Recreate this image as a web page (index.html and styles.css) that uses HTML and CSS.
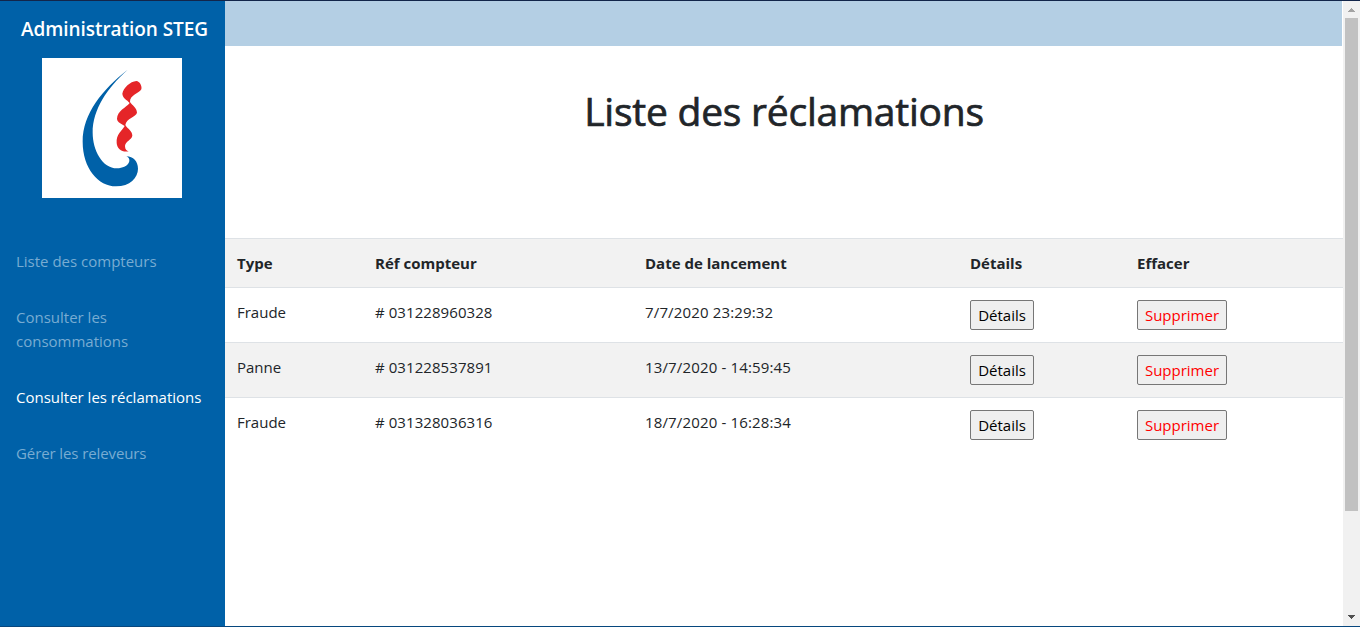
FILE: index.html
```html
<!DOCTYPE html>
<html lang="fr">
<head>
<meta charset="utf-8">
<title>Administration STEG</title>
<link rel="stylesheet" href="styles.css">
</head>
<body>
<div class="app">
  <aside class="sidebar">
    <div class="brand"><span class="brand-name">Administration STEG</span></div>
    <svg class="logo" viewBox="0 0 140 140" aria-hidden="true">
      <g transform="translate(28 2) scale(.33333)">
        <path fill="#0061a8" d="M173 29C98 88 38 160 38 245C38 325 85 379 138 379C180 379 204 353 204 326C204 305 190 289 169 289C188 297 177 325 141 325C97 325 68 270 68 218C68 148 112 83 173 29Z"/>
        <path fill="#e52528" d="M199 63C209 63 217 79 214 88C207 101 179 105 180 126C187 137 200 142 201 158C198 172 169 173 166 195C173 207 187 212 187 227C185 239 166 244 165 258C165 268 170 273 176 274C157 278 141 267 140 249C138 222 156 213 164 198C155 190 142 189 141 176C142 152 168 143 179 129C171 119 158 115 157 101C160 84 181 64 199 63Z"/>
      </g>
    </svg>
    <nav class="menu">
      <a class="menu-link link-meters">Liste des compteurs</a>
      <a class="menu-link link-usage">Consulter les consommations</a>
      <a class="menu-link active">Consulter les réclamations</a>
      <a class="menu-link link-readers">Gérer les releveurs</a>
    </nav>
  </aside>
  <main class="content">
    <div class="topbar"></div>
    <h1 class="title"><span>Liste des réclamations</span></h1>
    <table class="claims">
      <colgroup><col class="c-type"><col class="c-ref"><col class="c-date"><col class="c-details"><col class="c-delete"></colgroup>
      <tr class="head"><th>Type</th><th>Réf compteur</th><th>Date de lancement</th><th>Détails</th><th>Effacer</th></tr>
      <tr><td>Fraude</td><td class="ref"># 031228960328</td><td class="date">7/7/2020 23:29:32</td><td><button class="btn">Détails</button></td><td><button class="btn delete">Supprimer</button></td></tr>
      <tr><td>Panne</td><td class="ref"># 031228537891</td><td class="date">13/7/2020 - 14:59:45</td><td><button class="btn">Détails</button></td><td><button class="btn delete">Supprimer</button></td></tr>
      <tr><td>Fraude</td><td class="ref"># 031328036316</td><td class="date">18/7/2020 - 16:28:34</td><td><button class="btn">Détails</button></td><td><button class="btn delete">Supprimer</button></td></tr>
    </table>
  </main>
  <div class="scrollbar">
    <svg class="arrow" viewBox="0 0 17 17" shape-rendering="crispEdges"><path fill="#a3a3a3" d="M8 7h1v1h1v1h1v1h1v1H5v-1h1V9h1V8h1z"/></svg>
    <div class="thumb"></div>
    <svg class="arrow" viewBox="0 0 17 17" shape-rendering="crispEdges"><path fill="#505050" d="M5 6h7v1h-1v1h-1v1H9v1H8V9H7V8H6V7H5z"/></svg>
  </div>
</div>
</body>
</html>
```
FILE: styles.css
```css
* { box-sizing: border-box; }
body {
  margin: 0;
  height: 627px;
  overflow: hidden;
  background: #fff;
  color: #212529;
  font: 400 15px/24px "Open Sans", "Noto Sans", sans-serif;
}
.app {
  display: flex;
  height: 627px;
  border-top: 1px solid #12254a;
  border-bottom: 1px solid #07477e;
}
.sidebar {
  width: 225px;
  flex: none;
  display: flex;
  flex-direction: column;
  background: #0061a8;
  color: #fff;
}
.brand {
  height: 57px;
  padding: 13px 0 0 21px;
  font-size: 19px;
  line-height: 30px;
  font-weight: 600;
  letter-spacing: -.06px;
  white-space: nowrap;
}
.logo {
  display: block;
  width: 140px;
  height: 140px;
  margin-left: 42px;
  background: #fff;
}
.menu {
  display: flex;
  flex-direction: column;
  gap: 32px;
  padding: 51px 16px 0;
}
.menu-link { color: #78acd2; }
.menu-link.active { color: #fff; white-space: nowrap; }
.link-readers { letter-spacing: -.1px; }
.content { width: 1118px; flex: none; }
.topbar {
  height: 45px;
  margin-right: 1px;
  background: #b4cfe4;
}
.title {
  margin: 41px 0 0;
  height: 151px;
  font-size: 39px;
  line-height: 48px;
  font-weight: 500;
  letter-spacing: -.23px;
  -webkit-text-stroke: .7px #212529;
  text-align: center;
}
.claims {
  width: 1118px;
  table-layout: fixed;
  border-collapse: separate;
  border-spacing: 0;
}
.c-type { width: 138px; }
.c-ref { width: 270px; }
.c-date { width: 325px; }
.c-details { width: 167px; }
.c-delete { width: 218px; }
.claims th, .claims td {
  height: 55px;
  padding: 12px 12px 0;
  border-top: 1px solid #dee2e6;
  text-align: left;
  vertical-align: top;
}
.claims th { height: 49px; font-weight: 700; }
.claims tr:nth-child(odd) { background: #f2f2f2; }
.ref { letter-spacing: .07px; }
.date { letter-spacing: .15px; }
.btn {
  display: block;
  width: 64px;
  height: 30px;
  padding: 0;
  border: 1px solid #767676;
  border-radius: 2px;
  background: #efefef;
  color: #000;
  font: inherit;
  line-height: 28px;
}
.btn.delete { width: 90px; color: #f00; }
.scrollbar {
  width: 17px;
  display: flex;
  flex-direction: column;
  background: #f1f1f1;
}
.arrow { display: block; width: 17px; height: 17px; }
.thumb {
  height: 493px;
  margin: 0 2px auto;
  background: #c1c1c1;
}
```
